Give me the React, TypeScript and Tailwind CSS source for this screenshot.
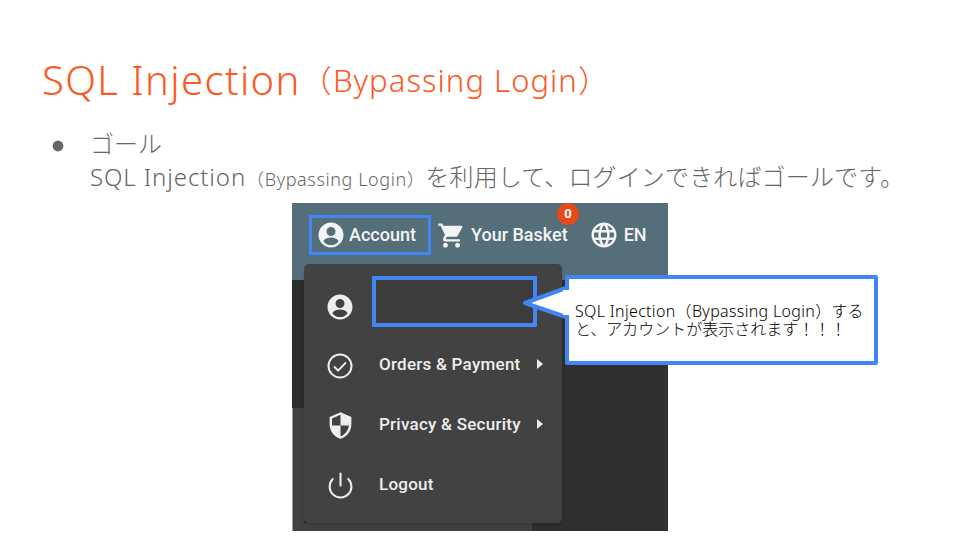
import { Power } from "lucide-react";

const font = { fontFamily: '"Noto Sans", "Noto Sans CJK JP", sans-serif' };

function UserCircle() {
  return (
    <svg viewBox="0 0 24 24" className="h-[30px] w-[30px]" fill="currentColor">
      <path d="M12 2C6.48 2 2 6.48 2 12s4.48 10 10 10 10-4.48 10-10S17.52 2 12 2zm0 3.600a3.600 3.600 0 1 1 0 7.200 3.600 3.600 0 0 1 0-7.200zM12 20a7.600 7.600 0 0 1-6-2.900c.1-2 4-3.100 6-3.100s5.900 1.100 6 3.100A7.600 7.600 0 0 1 12 20z" />
    </svg>
  );
}

function CheckCircle() {
  return (
    <svg viewBox="0 0 24 24" className="h-[30px] w-[30px]" fill="none" stroke="currentColor" strokeWidth="1.600">
      <circle cx="12" cy="12" r="9.200" />
      <path d="M7.200 12.400l3.300 3.300 6.300-6.600" />
    </svg>
  );
}

function Shield() {
  return (
    <svg viewBox="0 0 24 24" className="h-[29px] w-[29px]" fill="currentColor">
      <path d="M12 1 3 5v6c0 5.550 3.840 10.740 9 12 5.160-1.260 9-6.450 9-12V5l-9-4zm0 10.990h7c-.53 4.120-3.280 7.790-7 8.940V12H5V6.300l7-3.110v8.800z" />
    </svg>
  );
}

function Cart() {
  return (
    <svg viewBox="0 0 24 24" className="h-[29px] w-[29px]" fill="currentColor">
      <path d="M7 18c-1.100 0-1.990.900-1.990 2S5.900 22 7 22s2-.900 2-2-.900-2-2-2zM1 2v2h2l3.600 7.590-1.350 2.450c-.160.280-.250.610-.250.960 0 1.100.900 2 2 2h12v-2H7.420c-.140 0-.250-.110-.250-.250l.030-.120.900-1.630h7.450c.750 0 1.410-.410 1.750-1.030l3.580-6.490c.080-.120.120-.280.120-.480 0-.550-.450-1-1-1H5.210l-.940-2H1zm16 16c-1.100 0-1.990.900-1.990 2s.890 2 1.990 2 2-.900 2-2-.900-2-2-2z" />
    </svg>
  );
}

function Language() {
  return (
    <svg viewBox="0 0 24 24" className="h-[30px] w-[30px]" fill="currentColor">
      <path d="M11.990 2C6.470 2 2 6.480 2 12s4.470 10 9.990 10C17.520 22 22 17.520 22 12S17.520 2 11.990 2zm6.930 6h-2.950c-.320-1.250-.780-2.450-1.380-3.560 1.840.630 3.370 1.910 4.330 3.560zM12 4.040c.830 1.200 1.480 2.530 1.910 3.960h-3.820c.430-1.430 1.080-2.760 1.910-3.960zM4.260 14C4.100 13.360 4 12.690 4 12s.100-1.360.260-2h3.380c-.080.660-.140 1.320-.140 2 0 .680.060 1.340.140 2H4.260zm.820 2h2.950c.320 1.250.780 2.450 1.380 3.560-1.840-.630-3.370-1.900-4.330-3.560zm2.950-8H5.080c.960-1.660 2.490-2.930 4.330-3.560C8.810 5.550 8.350 6.750 8.030 8zM12 19.960c-.830-1.200-1.480-2.530-1.910-3.960h3.820c-.430 1.430-1.080 2.760-1.910 3.960zM14.340 14H9.660c-.090-.660-.160-1.320-.160-2 0-.680.070-1.350.160-2h4.680c.090.650.160 1.320.160 2 0 .680-.070 1.340-.160 2zm.250 5.560c.600-1.110 1.060-2.310 1.380-3.560h2.950c-.960 1.650-2.490 2.930-4.330 3.560zM16.360 14c.080-.660.140-1.320.140-2 0-.680-.060-1.340-.140-2h3.380c.160.640.260 1.310.260 2s-.100 1.360-.260 2h-3.380z" />
    </svg>
  );
}

function MenuItem({ icon, label, arrow }: { icon: React.ReactNode; label: string; arrow?: boolean }) {
  return (
    <div className="flex h-[60px] items-center text-[#eeeeee]">
      <div className="mb-[1px] flex w-[72px] justify-center">{icon}</div>
      <span className="mb-[4px] ml-[3px] w-[158px] font-['Roboto',sans-serif] text-[17px] leading-none font-medium tracking-[0.250px]">{label}</span>
      {arrow && <span className="mb-[5px] h-0 w-0 border-y-[5px] border-l-[6px] border-y-transparent border-l-[#eeeeee]" />}
    </div>
  );
}

export default function App() {
  return (
    <div className="flex h-[540px] w-[960px] flex-col overflow-hidden bg-white" style={font}>
      <h1 className="mt-[55px] ml-[42px] flex h-[50px] items-center whitespace-nowrap text-[#ff5722]">
        <span className="text-[40px] leading-none font-light tracking-[1.400px]">SQL Injection</span>
        <span className="text-[31px] leading-none font-light tracking-[1.050px]">（Bypassing Login）</span>
      </h1>

      <div className="mt-[22px] ml-[52px] flex text-[#666666]">
        <span className="mt-[13px] mr-[26px] h-[12px] w-[12px] shrink-0 scale-90 rounded-full bg-[#666666]" />
        <div className="text-[24px] leading-[33px] font-light whitespace-nowrap">
          <div>ゴール</div>
          <div>
            <span className="tracking-[0.900px]">SQL Injection</span>
            <span className="text-[18px] tracking-[0.600px]">（Bypassing Login）</span>
            <span className="tracking-[0.150px]">を利用して、ログインできればゴールです。</span>
          </div>
        </div>
      </div>

      <div className="relative mt-[7px] ml-[292px] flex h-[328px] w-[376px] flex-col bg-[#303030]">
        <div className="flex h-[77px] shrink-0 items-start bg-[#546e7a] pt-[12px] pl-[17px] font-['Roboto',sans-serif] text-[18px] leading-none font-medium text-[#f4f4f4]">
          <div className="flex h-[40px] w-[122px] items-center gap-[3px] border-[3px] border-[#4285f4] pl-[4px]">
            <UserCircle />
            <span>Account</span>
          </div>
          <div className="flex h-[40px] items-center">
            <span className="ml-[6px]">
              <Cart />
            </span>
            <span className="ml-[5px]">Your Basket</span>
            <span className="ml-[21px]">
              <Language />
            </span>
            <span className="ml-[5px]">EN</span>
          </div>
        </div>
        <div className="flex flex-1">
          <div className="flex w-[12px] flex-col">
            <div className="h-[128px] bg-[#2c2c2c]" />
            <div className="flex-1 border-l border-[#8fa3ad] bg-[#424242]" />
          </div>
          <div className="flex w-[228px] flex-col justify-end">
            <div className="h-[8px] bg-[#424242]" />
          </div>
        </div>

        {/* Badge */}
        <span className="absolute top-0 left-[265px] flex h-[22px] w-[22px] items-center justify-center rounded-full bg-[#e64a19] font-['Roboto',sans-serif] text-[13px] font-bold text-white">
          0
        </span>

        {/* Dropdown menu */}
        <div className="absolute top-[61px] left-[12px] h-[259px] w-[258px] rounded-[5px] bg-[#424242] pt-[12px] shadow-md">
          <MenuItem icon={<span className="mt-[3px]"><UserCircle /></span>} label="" />
          <MenuItem icon={<CheckCircle />} label="Orders & Payment" arrow />
          <MenuItem icon={<Shield />} label="Privacy & Security" arrow />
          <MenuItem icon={<Power className="h-[29px] w-[29px]" strokeWidth={1.700} />} label="Logout" />
        </div>

        {/* Highlight around the empty name row */}
        <div className="absolute top-[73px] left-[80px] h-[51px] w-[165px] rounded-[1px] border-[4px] border-[#4285f4] bg-[#3c3c3c]" />

        {/* Callout */}
        <div className="absolute top-[72px] left-[273px] h-[90px] w-[313px] rounded-[2px] border-[4px] border-[#4285f4] bg-white pt-[23px] pl-[6px] text-[16px] leading-[18px] font-light whitespace-nowrap text-black">
          <span className="tracking-[0.330px]">SQL Injection（Bypassing Login）</span>する
          <br />
          と、アカウントが表示されます！！！
        </div>
        <svg viewBox="0 0 48 46" className="absolute top-[77px] left-[230px] h-[46px] w-[48px]">
          <path d="M44 8 3 23l41 14z" fill="#fff" stroke="#4285f4" strokeWidth="4" strokeLinejoin="round" />
          <rect x="41" y="10" width="7" height="25" fill="#fff" />
        </svg>
      </div>
    </div>
  );
}
